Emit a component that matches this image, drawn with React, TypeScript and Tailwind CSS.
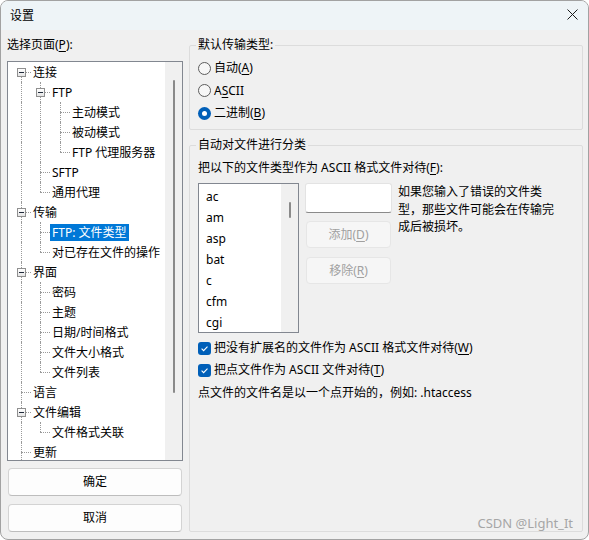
import React from "react";

type TNode = { label: React.ReactNode; level: number; exp?: boolean; sel?: boolean };

const nodes: TNode[] = [
  { label: "连接", level: 0, exp: true },
  { label: "FTP", level: 1, exp: true },
  { label: "主动模式", level: 2 },
  { label: "被动模式", level: 2 },
  { label: "FTP 代理服务器", level: 2 },
  { label: "SFTP", level: 1 },
  { label: "通用代理", level: 1 },
  { label: "传输", level: 0, exp: true },
  { label: "FTP: 文件类型", level: 1, sel: true },
  { label: "对已存在文件的操作", level: 1 },
  { label: "界面", level: 0, exp: true },
  { label: "密码", level: 1 },
  { label: "主题", level: 1 },
  { label: "日期/时间格式", level: 1 },
  { label: "文件大小格式", level: 1 },
  { label: "文件列表", level: 1 },
  { label: "语言", level: 0 },
  { label: "文件编辑", level: 0, exp: true },
  { label: "文件格式关联", level: 1 },
  { label: "更新", level: 0 },
];

const LINE_X = [13, 32, 52];
const TEXT_X = [25, 44, 64];

function isLast(i: number): boolean {
  const L = nodes[i].level;
  if (L === 0) return false; // more root items follow below the visible area
  for (let j = i + 1; j < nodes.length; j++) {
    if (nodes[j].level === L) return false;
    if (nodes[j].level < L) return true;
  }
  return true;
}

function ancestorIndex(i: number, level: number): number {
  for (let j = i - 1; j >= 0; j--) if (nodes[j].level === level) return j;
  return -1;
}

function U({ children }: { children: React.ReactNode }) {
  return <span className="underline underline-offset-[2px] decoration-[1px]">{children}</span>;
}

function TreeRow({ i }: { i: number }) {
  const n = nodes[i];
  const L = n.level;
  const x = LINE_X[L];
  const last = isLast(i);
  const verticals: { left: number; top: number; height: number }[] = [];
  for (let a = 0; a < L; a++) {
    const ai = ancestorIndex(i, a);
    if (ai >= 0 && !isLast(ai)) verticals.push({ left: LINE_X[a], top: 0, height: 20 });
  }
  if (i === 0) verticals.push({ left: x, top: 10, height: 10 });
  else if (last) verticals.push({ left: x, top: 0, height: 10 });
  else verticals.push({ left: x, top: 0, height: 20 });

  return (
    <div className="relative h-[20px] flex items-center" style={{ paddingLeft: TEXT_X[L] - 2 }}>
      {verticals.map((v, k) => (
        <span
          key={k}
          className="absolute w-0 border-l border-dotted border-[#9a9a9a]"
          style={{ left: v.left, top: v.top, height: v.height }}
        />
      ))}
      <span
        className="absolute top-[10px] h-0 border-t border-dotted border-[#9a9a9a]"
        style={{ left: x, width: TEXT_X[L] - 2 - x }}
      />
      {n.exp && (
        <span
          className="absolute top-[6px] w-[9px] h-[9px] border border-[#8f8f8f] bg-gradient-to-b from-white to-[#e4e4e4] flex items-center justify-center"
          style={{ left: x - 4 }}
        >
          <span className="w-[5px] h-[1px] bg-[#1f2a3a]" />
        </span>
      )}
      <span
        className={
          "h-[17px] leading-[17px] px-[2px] whitespace-nowrap " +
          (n.sel ? "bg-[#0078d7] text-white" : "text-black")
        }
      >
        {n.label}
      </span>
    </div>
  );
}

function Radio({ checked }: { checked?: boolean }) {
  return checked ? (
    <span className="w-[13px] h-[13px] rounded-full bg-[#005fb8] flex items-center justify-center shrink-0">
      <span className="w-[5px] h-[5px] rounded-full bg-white" />
    </span>
  ) : (
    <span className="w-[13px] h-[13px] rounded-full border border-[#5d5d5d] bg-[#f7f7f7] shrink-0" />
  );
}

function Check() {
  return (
    <span className="w-[13px] h-[13px] rounded-[3px] bg-[#005fb8] flex items-center justify-center shrink-0">
      <svg width="13" height="13" viewBox="0 0 13 13">
        <path d="M3.6 6.7 L5.6 8.7 L9.5 4.6" fill="none" stroke="white" strokeWidth="1.1" />
      </svg>
    </span>
  );
}

const exts = ["ac", "am", "asp", "bat", "c", "cfm", "cgi"];

export default function App() {
  return (
    <div className="w-[589px] h-[540px] bg-white">
      <div className="relative w-full h-full bg-[#f0f0f0] border border-[#a2a2a2] rounded-[8px] overflow-hidden flex flex-col text-[12px] text-black font-['Noto_Sans','Noto_Sans_CJK_SC',sans-serif]">
        {/* title bar */}
        <div className="h-[29px] shrink-0 bg-[#eef4f7] flex items-center justify-between pl-[9px] pr-[10px]">
          <span className="leading-[16px]">设置</span>
          <svg width="11" height="11" viewBox="0 0 11 11" className="-mt-[2px]">
            <path d="M0.5 0.5 L10.5 10.5 M10.5 0.5 L0.5 10.5" stroke="#1a1a1a" strokeWidth="1" />
          </svg>
        </div>

        {/* body */}
        <div className="flex flex-1 pl-[6px] pr-[5px] gap-[6px] pb-[7px]">
          {/* left column */}
          <div className="w-[176px] flex flex-col">
            <div className="mt-[6px] h-[18px] leading-[18px]">
              选择页面(<U>P</U>):
            </div>
            <div className="mt-[7px] h-[400px] border border-[#828790] bg-white flex overflow-hidden">
              <div className="flex-1 overflow-hidden">
                {nodes.map((_, i) => (
                  <TreeRow key={i} i={i} />
                ))}
              </div>
              <div className="w-[17px] bg-[#f0f0f0] flex justify-center">
                <div className="mt-[18px] w-[2px] h-[313px] rounded-full bg-[#8a8a8a]" />
              </div>
            </div>
            <div className="mt-[7px] ml-[1px] w-[174px] h-[28px] bg-[#fdfdfd] border border-[#d3d3d3] border-b-[#bdbdbd] rounded-[4px] flex items-center justify-center">
              确定
            </div>
            <div className="mt-[8px] ml-[1px] w-[174px] h-[28px] bg-[#fdfdfd] border border-[#d3d3d3] border-b-[#bdbdbd] rounded-[4px] flex items-center justify-center">
              取消
            </div>
          </div>

          {/* right column */}
          <div className="w-[394px] flex flex-col">
            <fieldset className="mt-[7px] h-[93px] border border-[#dcdcdc] rounded-[2px] pl-[8px]">
              <legend className="px-[2px] -ml-[2px] leading-[16px]">默认传输类型:</legend>
              <div className="mt-[4px] flex flex-col">
                <div className="h-[22.5px] flex items-center gap-[3px]">
                  <Radio />
                  <span>
                    自动(<U>A</U>)
                  </span>
                </div>
                <div className="h-[22.5px] flex items-center gap-[3px]">
                  <Radio />
                  <span>
                    A<U>S</U>CII
                  </span>
                </div>
                <div className="h-[22.5px] flex items-center gap-[3px]">
                  <Radio checked />
                  <span>
                    二进制(<U>B</U>)
                  </span>
                </div>
              </div>
            </fieldset>

            <fieldset className="mt-[7px] flex-1 border border-[#dcdcdc] rounded-[2px] pl-[8px]">
              <legend className="px-[2px] -ml-[2px] leading-[16px]">自动对文件进行分类</legend>
              <div className="mt-[7px] h-[16px] leading-[16px] whitespace-nowrap">
                把以下的文件类型作为 ASCII 格式文件对待(<U>F</U>):
              </div>
              <div className="mt-[7px] flex">
                <div className="w-[101px] h-[150px] border border-[#828790] bg-white flex overflow-hidden">
                  <div className="flex-1 pt-[2px] pl-[7px]">
                    {exts.map((e) => (
                      <div key={e} className="h-[21px] leading-[21px]">
                        {e}
                      </div>
                    ))}
                  </div>
                  <div className="w-[17px] bg-[#f0f0f0] flex justify-center">
                    <div className="mt-[18px] w-[2px] h-[16px] rounded-full bg-[#8a8a8a]" />
                  </div>
                </div>
                <div className="ml-[6px] w-[87px] flex flex-col">
                  <div className="h-[30px] bg-white border border-[#e3e3e3] border-b-[#8a8a8a] rounded-[3px]" />
                  <div className="mt-[8px] ml-[1px] w-[85px] h-[27px] bg-[#f6f6f6] border border-[#e6e6e6] rounded-[4px] flex items-center justify-center text-[#a0a0a0]">
                    添加(<U>D</U>)
                  </div>
                  <div className="mt-[9px] ml-[1px] w-[85px] h-[27px] bg-[#f6f6f6] border border-[#e6e6e6] rounded-[4px] flex items-center justify-center text-[#a0a0a0]">
                    移除(<U>R</U>)
                  </div>
                </div>
                <div className="ml-[6px] leading-[17.5px] whitespace-nowrap">
                  如果您输入了错误的文件类
                  <br />
                  型，那些文件可能会在传输完
                  <br />
                  成后被损坏。
                </div>
              </div>
              <div className="mt-[4px] h-[22px] flex items-center gap-[3px] whitespace-nowrap">
                <Check />
                <span>
                  把没有扩展名的文件作为 ASCII 格式文件对待(<U>W</U>)
                </span>
              </div>
              <div className="h-[22px] flex items-center gap-[3px] whitespace-nowrap">
                <Check />
                <span>
                  把点文件作为 ASCII 文件对待(<U>T</U>)
                </span>
              </div>
              <div className="mt-[3px] h-[18px] leading-[18px] whitespace-nowrap">
                点文件的文件名是以一个点开始的，例如: .htaccess
              </div>
            </fieldset>
          </div>
        </div>

        <div className="absolute right-[15px] bottom-[8px] text-[13px] leading-[16px] text-[#a6a6a6]">
          CSDN @Light_It
        </div>
      </div>
    </div>
  );
}
